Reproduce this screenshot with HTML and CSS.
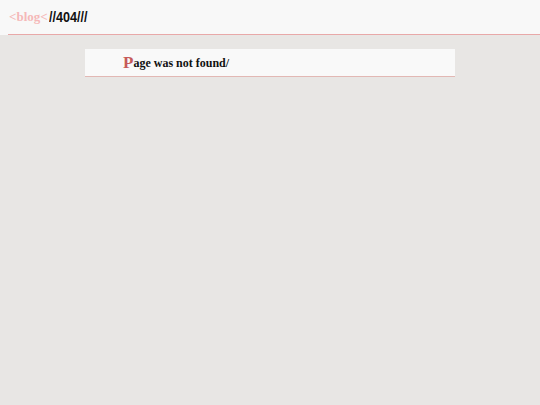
FILE: index.html
```html
<!DOCTYPE html>
<html>
<head>
<meta charset="utf-8">
<link rel="stylesheet" href="styles.css">
</head>
<body>
<header class="top">
  <div class="top-inner">
    <span class="brand">&lt;blog&lt;</span><span class="path">//404///</span>
  </div>
</header>
<main class="main">
  <div class="notice">
    <span class="cap">P</span><span class="msg">age was not found/</span>
  </div>
</main>
</body>
</html>
```
FILE: styles.css
```css
html, body {
  margin: 0;
  padding: 0;
}
body {
  background: #e8e6e4;
  font-family: "Liberation Serif", serif;
  width: 540px;
  height: 405px;
}
.top {
  background: #f8f8f8;
  padding-left: 8px;
}
.top-inner {
  height: 34px;
  border-bottom: 1px solid #e8a8a8;
  display: flex;
  align-items: center;
  padding-left: 1px;
}
.brand {
  font-weight: bold;
  font-size: 13px;
  color: #f5b8b8;
}
.path {
  display: inline-block;
  margin-left: 1px;
  font-family: "Liberation Sans", sans-serif;
  font-weight: bold;
  font-size: 14px;
  color: #111;
  transform: scaleX(0.9);
  transform-origin: left center;
}
.main {
  padding-top: 14px;
  display: flex;
  justify-content: center;
}
.notice {
  width: 332px;
  height: 26px;
  padding-left: 38px;
  background: #f9f9f9;
  border-bottom: 1px solid #e2b8b4;
  display: flex;
  align-items: center;
  padding-top: 1px;
  box-sizing: content-box;
}
.cap {
  font-weight: bold;
  font-size: 17px;
  color: #c65a5a;
}
.msg {
  font-weight: bold;
  font-size: 12px;
  color: #111;
}
```
